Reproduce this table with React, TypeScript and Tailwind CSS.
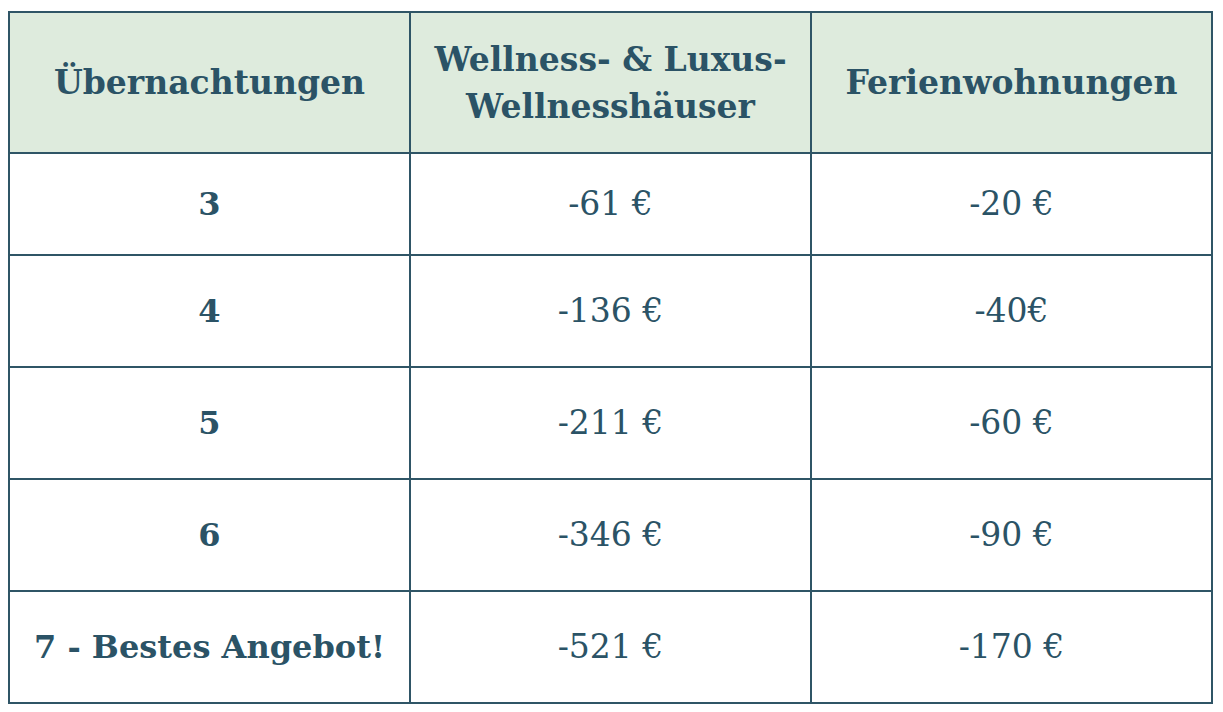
import React from "react";

const rows: { n: string; a: string; b: string; h: string }[] = [
  { n: "3", a: "-61 €", b: "-20 €", h: "h-[102px]" },
  { n: "4", a: "-136 €", b: "-40€", h: "h-[112px]" },
  { n: "5", a: "-211 €", b: "-60 €", h: "h-[112px]" },
  { n: "6", a: "-346 €", b: "-90 €", h: "h-[112px]" },
  { n: "7 - Bestes Angebot!", a: "-521 €", b: "-170 €", h: "h-[112px]" },
];

export default function App() {
  const font = { fontFamily: '"DejaVu Serif", Georgia, serif' };
  return (
    <div className="min-h-screen bg-white pl-[8px] pt-[11px]" style={font}>
      <div className="grid w-[1205px] grid-cols-3 border-l-2 border-t-2 border-[#2f5566] text-[#2b5366]">
        <div className="flex h-[141px] items-center justify-center border-b-2 border-r-2 border-[#2f5566] bg-[#deebdd] px-2 text-center text-[33px] font-bold leading-[48px]">
          Übernachtungen
        </div>
        <div className="flex h-[141px] items-center justify-center border-b-2 border-r-2 border-[#2f5566] bg-[#deebdd] px-2 text-center text-[33px] font-bold leading-[47px]">
          Wellness- &amp; Luxus-
          <br />
          Wellnesshäuser
        </div>
        <div className="flex h-[141px] items-center justify-center border-b-2 border-r-2 border-[#2f5566] bg-[#deebdd] px-2 text-center text-[33px] font-bold leading-[48px]">
          Ferienwohnungen
        </div>
        {rows.map((r) => (
          <React.Fragment key={r.n}>
            <div className={`flex ${r.h} items-center justify-center border-b-2 border-r-2 border-[#2f5566] text-center text-[32px] font-bold`}>
              {r.n}
            </div>
            <div className={`flex ${r.h} items-center justify-center border-b-2 border-r-2 border-[#2f5566] text-center text-[33px]`}>
              {r.a}
            </div>
            <div className={`flex ${r.h} items-center justify-center border-b-2 border-r-2 border-[#2f5566] text-center text-[33px]`}>
              {r.b}
            </div>
          </React.Fragment>
        ))}
      </div>
    </div>
  );
}
